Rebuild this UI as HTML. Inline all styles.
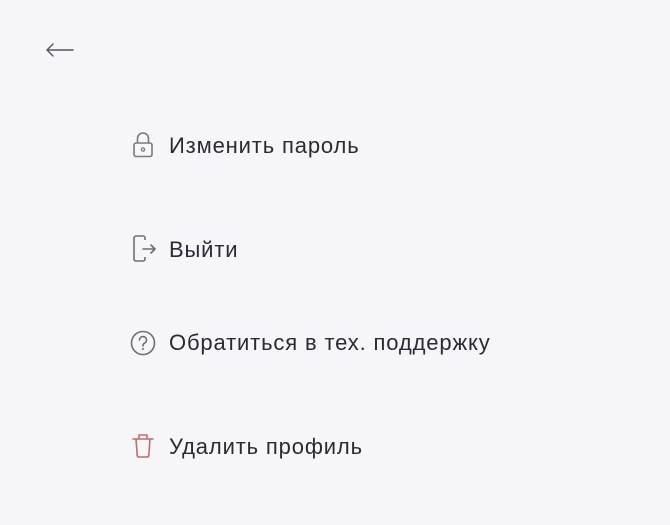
<!DOCTYPE html>
<html><head><meta charset="utf-8"><style>
html,body{margin:0;padding:0;width:670px;height:525px;background:#f6f6f8;overflow:hidden}
body{position:relative;font-family:"Segoe UI","Liberation Sans",sans-serif;color:#2b2b30}
.t{position:absolute;left:169px;font-size:22px;letter-spacing:0.85px;line-height:24px;white-space:nowrap}
svg{position:absolute}
</style></head><body>
<svg style="left:44px;top:40px" width="32" height="20" viewBox="0 0 32 20"><path d="M3 10H29M3 10L9 4M3 10L9 16" stroke="#505468" stroke-width="1.4" fill="none" stroke-linecap="round"/></svg>

<svg style="left:131px;top:131px" width="24" height="28" viewBox="0 0 24 28"><rect x="3" y="12" width="18" height="13.5" rx="2" stroke="#7a7a7e" stroke-width="1.6" fill="none"/><path d="M6.5 12V7.5a5.5 5.5 0 0 1 11 0V12" stroke="#7a7a7e" stroke-width="1.6" fill="none"/><circle cx="12" cy="18.5" r="1.6" stroke="#7a7a7e" stroke-width="1.3" fill="none"/></svg>
<div class="t" style="top:134px">Изменить пароль</div>

<svg style="left:131px;top:234px" width="28" height="29" viewBox="0 0 28 29"><path d="M14 6V4a2 2 0 0 0-2-2H5a2 2 0 0 0-2 2v21a2 2 0 0 0 2 2h7a2 2 0 0 0 2-2v-2" stroke="#6e6e72" stroke-width="1.6" fill="none"/><path d="M12 15h12M20 11l4 4-4 4" stroke="#6e6e72" stroke-width="1.6" fill="none" stroke-linecap="round" stroke-linejoin="round"/></svg>
<div class="t" style="top:238px">Выйти</div>

<svg style="left:130px;top:330px" width="26" height="26" viewBox="0 0 26 26"><circle cx="13" cy="13" r="11.5" stroke="#6e6e72" stroke-width="1.6" fill="none"/><path d="M9.5 10a3.5 3.5 0 1 1 5 3.2c-1 .5-1.5 1.2-1.5 2.3v.5" stroke="#6e6e72" stroke-width="1.6" fill="none" stroke-linecap="round"/><circle cx="13" cy="19" r="1" fill="#6e6e72"/></svg>
<div class="t" style="top:331px">Обратиться в тех. поддержку</div>

<svg style="left:131px;top:432px" width="26" height="27" viewBox="0 0 26 27"><path d="M2 7h20M8 7V3h8v4M5 7l1.2 16.5a2 2 0 0 0 2 1.5h7.6a2 2 0 0 0 2-1.5L19 7" stroke="#c06a6a" stroke-width="1.6" fill="none" stroke-linejoin="round" stroke-linecap="round"/></svg>
<div class="t" style="top:435px">Удалить профиль</div>
</body></html>
